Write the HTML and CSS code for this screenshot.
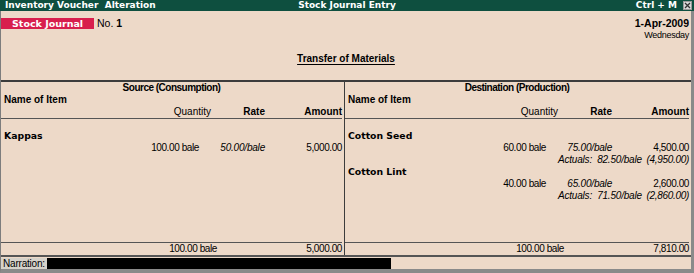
FILE: index.html
```html
<!DOCTYPE html>
<html>
<head>
<meta charset="utf-8">
<title>Stock Journal Entry</title>
<link rel="stylesheet" href="styles.css">
</head>
<body>
<div class="app">
  <div class="titlebar">
    <div class="tb-left">Inventory Voucher&nbsp; Alteration</div>
    <div class="tb-center">Stock Journal Entry</div>
    <div class="tb-right">
      <span class="shortcut">Ctrl + M</span>
      <span class="close"><svg width="7" height="7" viewBox="0 0 7 7"><path d="M1 1 L6 6 M6 1 L1 6" stroke="#333" stroke-width="1.3" fill="none"/></svg></span>
    </div>
  </div>
  <div class="frame">
    <div class="voucher-head">
      <div class="vh-left">
        <span class="vtype">Stock Journal</span>
        <span class="vno">No. <b>1</b></span>
      </div>
      <div class="vh-right">
        <div class="date">1-Apr-2009</div>
        <div class="day">Wednesday</div>
      </div>
    </div>
    <div class="doc-title"><span>Transfer of Materials</span></div>
    <div class="table">
      <div class="side side-left">
        <div class="side-title">Source (Consumption)</div>
        <div class="name-h">Name of Item</div>
        <div class="cols"><span class="c-q">Quantity</span><span class="c-r">Rate</span><span class="c-a">Amount</span></div>
        <div class="entries">
          <div class="item">Kappas</div>
          <div class="row"><span class="q">100.00 bale</span><span class="r">50.00/bale</span><span class="a">5,000.00</span></div>
        </div>
        <div class="totals"><span class="tq">100.00 bale</span><span></span><span class="a">5,000.00</span></div>
      </div>
      <div class="side side-right">
        <div class="side-title">Destination (Production)</div>
        <div class="name-h">Name of Item</div>
        <div class="cols"><span class="c-q">Quantity</span><span class="c-r">Rate</span><span class="c-a">Amount</span></div>
        <div class="entries">
          <div class="item">Cotton Seed</div>
          <div class="row"><span class="q">60.00 bale</span><span class="r">75.00/bale</span><span class="a">4,500.00</span></div>
          <div class="row"><span class="q"></span><span class="r">Actuals:&nbsp; 82.50/bale</span><span class="a it">(4,950.00)</span></div>
          <div class="item">Cotton Lint</div>
          <div class="row"><span class="q">40.00 bale</span><span class="r">65.00/bale</span><span class="a">2,600.00</span></div>
          <div class="row"><span class="q"></span><span class="r">Actuals:&nbsp; 71.50/bale</span><span class="a it">(2,860.00)</span></div>
        </div>
        <div class="totals"><span class="tq">100.00 bale</span><span></span><span class="a">7,810.00</span></div>
      </div>
    </div>
    <div class="narration">
      <span class="n-label">Narration:</span>
      <span class="n-field"></span>
      <span class="n-rest"></span>
    </div>
  </div>
</div>
</body>
</html>
```

FILE: styles.css
```css
* { box-sizing: border-box; }
html, body { margin: 0; padding: 0; }
body {
  width: 694px;
  height: 273px;
  overflow: hidden;
  background: #edd9c8;
  font-family: "Liberation Sans", Arial, sans-serif;
  font-size: 10px;
  color: #000;
}
.app {
  width: 694px;
  height: 273px;
  display: flex;
  flex-direction: column;
}
.titlebar {
  height: 11px;
  background: #0e4f3f;
  color: #fff;
  font-family: "DejaVu Sans", Verdana, sans-serif;
  font-weight: bold;
  font-size: 9px;
  line-height: 11px;
  display: grid;
  grid-template-columns: 1fr auto 1fr;
  white-space: nowrap;
}
.tb-left { padding-left: 5px; }
.tb-center { text-align: center; }
.tb-right {
  display: flex;
  justify-content: flex-end;
  align-items: center;
  gap: 6px;
  padding-right: 2px;
}
.close {
  width: 9px;
  height: 9px;
  background: #d9d9d9;
  border: 1px solid #9a9a9a;
  display: flex;
  align-items: center;
  justify-content: center;
}
.frame {
  flex: 1;
  display: flex;
  flex-direction: column;
  border-left: 1px solid #7d7d7d;
  border-right: 3px solid #8a8a8a;
  border-bottom: 4px solid #8a8a8a;
}
.voucher-head {
  margin-top: 6px;
  height: 24px;
  display: flex;
  justify-content: space-between;
  align-items: flex-start;
}
.vh-left {
  display: flex;
  align-items: center;
  margin-top: 1px;
}
.vtype {
  width: 93px;
  height: 11px;
  background: #d81f4d;
  color: #fff;
  font-family: "DejaVu Sans", Verdana, sans-serif;
  font-weight: bold;
  font-size: 9.5px;
  line-height: 11px;
  padding-left: 11px;
  white-space: nowrap;
}
.vno {
  margin-left: 3px;
  font-size: 10.5px;
  line-height: 11px;
}
.vh-right {
  text-align: right;
  padding-right: 2px;
  line-height: 12px;
}
.date {
  font-weight: bold;
  font-size: 10.5px;
}
.day {
  font-size: 9px;
  letter-spacing: -0.3px;
}
.doc-title {
  margin-top: 12px;
  height: 12px;
  line-height: 12px;
  margin-bottom: 15px;
  text-align: center;
  font-weight: bold;
  font-size: 10px;
}
.doc-title span {
  text-decoration: underline;
  text-underline-offset: 2px;
}
.table {
  flex: 1;
  display: grid;
  grid-template-columns: 344px 1fr;
  border-top: 2px solid #3c3c3c;
}
.side {
  display: grid;
  grid-template-rows: 12px 12px 13px 1fr 13px;
  padding-right: 2px;
}
.side-left {
  border-right: 1px solid #3c3c3c;
}
.side-title {
  text-align: center;
  font-weight: bold;
  font-size: 10px;
  letter-spacing: -0.5px;
  line-height: 12px;
  white-space: nowrap;
}
.name-h {
  font-weight: bold;
  font-size: 10px;
  line-height: 12px;
  padding-left: 3px;
}
.cols, .row, .totals {
  display: grid;
  grid-template-columns: 1fr 54px 77px;
  line-height: 12px;
  white-space: nowrap;
}
.cols {
  border-bottom: 1px solid #555;
  height: 13px;
}
.cols span, .row span, .totals span { text-align: right; }
.c-r, .c-a { font-weight: bold; }
.entries {
  padding-top: 11px;
}
.item {
  font-family: "DejaVu Sans", Verdana, sans-serif;
  font-weight: bold;
  font-size: 9.3px;
  line-height: 12px;
  padding-left: 3px;
}
.row .q {
  padding-right: 12px;
  letter-spacing: -0.4px;
}
.row .r {
  font-style: italic;
  letter-spacing: -0.2px;
}
.row .a {
  letter-spacing: -0.4px;
}
.row .a.it {
  font-style: italic;
  letter-spacing: -0.3px;
}
.totals {
  border-top: 1px solid #555;
  height: 13px;
}
.totals .tq {
  margin-right: -6px;
  letter-spacing: -0.4px;
}
.totals .a { letter-spacing: -0.4px; }
.narration {
  border-top: 2px solid #555;
  padding-top: 1px;
  height: 14px;
  display: flex;
}
.n-label {
  width: 46px;
  background: #d6d2ca;
  line-height: 11px;
  padding-left: 2px;
  letter-spacing: -0.2px;
}
.n-field {
  width: 344px;
  background: #000;
}
.n-rest { flex: 1; }
```
